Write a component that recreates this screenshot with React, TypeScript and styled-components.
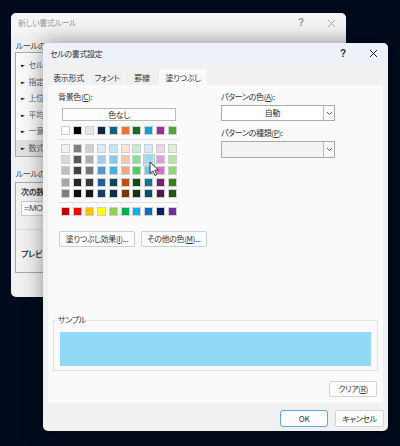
import React from "react";
import styled, { createGlobalStyle } from "styled-components";

const Global = createGlobalStyle`
  html, body { margin: 0; padding: 0; background: #020b1e; }
  #root { width: 400px; height: 446px; }
  * { box-sizing: border-box; }
`;
const Desktop = styled.div`
  position: relative; width: 400px; height: 446px; overflow: hidden;
  background: #020b1d;
  font-family: "Noto Sans CJK JP", "Noto Sans", sans-serif;
  font-size: 8px; line-height: 12px; color: #333; letter-spacing: -0.35px;
  font-feature-settings: "palt";
`;
const BackWindow = styled.section`
  position: absolute; left: 11px; top: 13px; width: 335px; height: 284px;
  display: flex; flex-direction: column; overflow: hidden;
  background: #f1f1f1; border-radius: 5px; color: #555;
`;
const FrontWindow = styled.section`
  position: absolute; left: 43px; top: 43px; width: 345px; height: 388px;
  display: flex; flex-direction: column;
  background: #f1f1f1; border-radius: 5px;
  box-shadow: 0 0 22px rgba(0,0,0,.42);
`;
const TitleBar = styled.header<{ $active?: boolean }>`
  flex: none; height: 21px; display: flex; align-items: center; padding-left: 7px;
  background: ${p => p.$active ? "#eef1fa" : "#f5f5f5"};
  color: ${p => p.$active ? "#333" : "#999"};
  border-radius: 5px 5px 0 0;
`;
const BackTitleBar = styled(TitleBar)`height: 20px; margin-bottom: 7px;`;
const TitleText = styled.span`flex: 1;`;
const TitleHelp = styled.span`width: 30px; text-align: center; font-size: 10px; font-family: "Liberation Sans", sans-serif; font-weight: 700;`;
const CloseSlot = styled.span`width: 30px; display: flex; justify-content: center;`;
const BackBody = styled.div`padding: 0 4px; display: flex; flex-direction: column;`;
const BackLabel = styled.div`white-space: nowrap; color: #444; height: 12px; padding-left: 1px;`;
const RuleList = styled.ul`
  list-style: none; margin: 0; padding: 4px 0 0; height: 105px;
  border: 1px solid #aaa; background: #fafafa; display: flex; flex-direction: column;
`;
const RuleItem = styled.li<{ $selected?: boolean }>`
  height: 16.8px; line-height: 16px; padding-left: 5px; white-space: nowrap; color: #666;
  display: flex; align-items: center; gap: 4px;
  background: ${p => p.$selected ? "#e2e2e2" : "transparent"};
`;
const Bullet = styled.span`font-size: 5px; color: #111; font-family: "DejaVu Sans", sans-serif;`;
const RuleSection = styled.div`margin-top: 11px;`;
const RuleBox = styled.div`
  border: 1px solid #aaa; height: 91px; margin-top: 2px; background: #f2f2f2;
  display: flex; flex-direction: column;
`;
const RuleTop = styled.div`height: 47px; padding: 3px 5px; border-bottom: 1px solid #ddd;`;
const StrongText = styled.div`font-weight: 700; color: #444; white-space: nowrap;`;
const FormulaInput = styled.div`
  margin-top: 3px; height: 15px; width: 200px; background: #fff; border: 1px solid #ccc;
  font-family: "Liberation Sans", sans-serif; font-size: 9px; padding-left: 2px; color: #555; line-height: 13px;
`;
const Preview = styled(StrongText)`padding: 18px 5px 0;`;

const Tabs = styled.nav`flex: none; display: flex; align-items: flex-end; height: 21px; padding: 0 5px;`;
const Tab = styled.button<{ $active?: boolean; $w: number }>`
  all: unset; box-sizing: border-box; width: ${p => p.$w}px; text-align: center;
  height: ${p => p.$active ? 16 : 14}px; line-height: ${p => p.$active ? 15 : 14}px;
  background: ${p => p.$active ? "#fafafa" : "#f0f0f0"};
  border-right: 1px solid #f8f8f8; color: #333;
`;
const Panel = styled.div`
  flex: none; height: 318px; margin: 0 5px; background: #fafafa; padding: 6px 5px 0;
  display: flex; flex-direction: column;
`;
const Columns = styled.div`display: flex; flex: none; height: 229px;`;
const LeftCol = styled.div`width: 168px; padding-left: 5px;`;
const RightCol = styled.div`width: 115px;`;
const Label = styled.div`height: 12px; color: #333; white-space: nowrap;`;
const Key = styled.span`text-decoration: underline;`;
const NoColor = styled.button`
  all: unset; box-sizing: border-box; display: block; width: 114px; height: 13px; margin: 5px 0 3px 4px;
  border: 1px solid #bbb; background: #fdfdfd; text-align: center; line-height: 11px; color: #333;
`;
const PaletteGrid = styled.div<{ $rowH: number }>`
  display: grid; grid-template-columns: repeat(10, 11.85px); grid-auto-rows: ${p => p.$rowH}px;
  margin-left: 2px; justify-items: center; align-items: center;
`;
const Divider = styled.hr`border: 0; height: 1px; background: #e2e2e2; margin: 3px 0; width: 121px;`;
const SwatchCell = styled.span<{ $on?: boolean }>`
  width: 12px; height: 12px; display: flex; align-items: center; justify-content: center;
  background: ${p => p.$on ? "#cde6f7" : "transparent"};
  outline: ${p => p.$on ? "1px solid #a8d4f0" : "none"}; outline-offset: -1px;
`;
const Swatch = styled.span<{ $c: string }>`
  width: 9px; height: 9px; background: ${p => p.$c}; border: 1px solid #cfcfcf;
`;
const Select = styled.div<{ $h: number; $off?: boolean }>`
  width: 114px; height: ${p => p.$h}px; margin-top: 2px; display: flex;
  border: 1px solid #aaa; background: ${p => p.$off ? "#f3f3f3" : "#fff"};
`;
const SelectValue = styled.span`flex: 1; text-align: center; line-height: 14px; color: #333;`;
const SelectArrow = styled.span`width: 11px; background: #fafafa; border-left: 1px solid #bbb; display: flex; align-items: center; justify-content: center;`;
const SecondLabel = styled(Label)`margin-top: 6px;`;
const ActionRow = styled.div`display: flex; gap: 6px; margin-top: 13px; margin-left: 1px;`;
const PlainButton = styled.button<{ $w: number; $h?: number }>`
  all: unset; box-sizing: border-box; width: ${p => p.$w}px; height: ${p => p.$h ?? 16}px; text-align: center;
  border: 1px solid #d4d4d4; border-radius: 2px; background: #fdfdfd; line-height: 14px; color: #333; white-space: nowrap;
`;
const ActionButton = styled(PlainButton)`border-color: #c8d0da;`;
const SampleBox = styled.fieldset`
  margin: 0; padding: 0 6px 5px; height: 51px; border: 1px solid #e3e3e3; position: relative; flex: none;
`;
const SampleLegend = styled.span`
  position: absolute; left: 3px; top: -7px; background: #fafafa; padding: 0 1px; color: #333;
`;
const SampleFill = styled.div`height: 34px; margin-top: 11px; background: #92d9f7;`;
const ClearRow = styled.div`display: flex; justify-content: flex-end; margin-top: 10px; padding-right: 1px;`;
const Footer = styled.footer`flex: 1; display: flex; justify-content: flex-end; align-items: flex-start; gap: 7px; padding: 7px 4px 0 0;`;
const OkButton = styled(PlainButton)`border: 1px solid #5fa7dc; border-radius: 3px; line-height: 15px;`;
const CancelButton = styled(PlainButton)`line-height: 15px;`;
const Cursor = styled.svg`position: absolute; left: 149px; top: 161px;`;

const Close = ({ c }: { c: string }) => (
  <svg width="9" height="9" viewBox="0 0 9 9"><path d="M1 1l7 7M8 1L1 8" stroke={c} strokeWidth="1" fill="none" /></svg>
);
const Chevron = () => (
  <svg width="7" height="5" viewBox="0 0 7 5"><path d="M1 1l2.5 2.5L6 1" stroke="#666" fill="none" /></svg>
);

const theme = ["#ffffff","#000000","#e7e6e6","#0e2841","#156082","#e97132","#196b24","#0f9ed5","#a02b93","#4ea72e"];
const shades = [
  ["#f2f2f2","#7f7f7f","#d0d0d0","#dceaf7","#c1e5f5","#fbe3d6","#c1f0c8","#caedfb","#f2ceef","#d9f2d0"],
  ["#d9d9d9","#595959","#adadad","#a6caec","#83cbeb","#f6c6ad","#83e28e","#95dcf7","#e59edd","#b4e5a2"],
  ["#bfbfbf","#404040","#757575","#4e95d9","#45b0e1","#f1a983","#47d359","#60caf3","#d86dcd","#8ed973"],
  ["#a6a6a6","#262626","#3a3838","#215f9a","#0f4761","#c04f15","#0f4d18","#0b769f","#782070","#3b7d23"],
  ["#7f7f7f","#0d0d0d","#171717","#163e64","#0b3041","#80350e","#0c3512","#074f6a","#501549","#275317"],
];
const standard = ["#c00000","#ff0000","#ffc000","#ffff00","#92d050","#00b050","#00b0f0","#0070c0","#002060","#7030a0"];

const Row = ({ colors, rowH, on }: { colors: string[]; rowH: number; on?: string }) => (
  <PaletteGrid $rowH={rowH}>
    {colors.map((c, i) => (
      <SwatchCell key={i} $on={c === on}><Swatch $c={c} /></SwatchCell>
    ))}
  </PaletteGrid>
);

const rules = ["セル", "指定", "上位", "平均", "一意", "数式"];

export default function App() {
  return (
    <Desktop>
      <Global />
      <BackWindow>
        <BackTitleBar>
          <TitleText>新しい書式ルール</TitleText>
          <TitleHelp>?</TitleHelp>
          <CloseSlot><Close c="#a8a8a8" /></CloseSlot>
        </BackTitleBar>
        <BackBody>
          <BackLabel>ルールの</BackLabel>
          <RuleList>
            {rules.map((r, i) => <RuleItem key={i} $selected={i === 5}><Bullet>►</Bullet>{r}</RuleItem>)}
          </RuleList>
          <RuleSection>
            <BackLabel>ルールの</BackLabel>
            <RuleBox>
              <RuleTop>
                <StrongText>次の数</StrongText>
                <FormulaInput>=MO</FormulaInput>
              </RuleTop>
              <Preview>プレビ</Preview>
            </RuleBox>
          </RuleSection>
        </BackBody>
      </BackWindow>

      <FrontWindow>
        <TitleBar $active>
          <TitleText>セルの書式設定</TitleText>
          <TitleHelp>?</TitleHelp>
          <CloseSlot><Close c="#222" /></CloseSlot>
        </TitleBar>
        <Tabs>
          <Tab $w={42}>表示形式</Tab>
          <Tab $w={35}>フォント</Tab>
          <Tab $w={35}>罫線</Tab>
          <Tab $w={47} $active>塗りつぶし</Tab>
        </Tabs>
        <Panel>
          <Columns>
            <LeftCol>
              <Label>背景色(<Key>C</Key>):</Label>
              <NoColor>色なし</NoColor>
              <Row colors={theme} rowH={12} />
              <Divider />
              {shades.map((s, i) => <Row key={i} colors={s} rowH={11.2} on={i === 1 ? "#95dcf7" : undefined} />)}
              <Divider />
              <Row colors={standard} rowH={12} />
              <ActionRow>
                <ActionButton $w={76}>塗りつぶし効果(<Key>I</Key>)...</ActionButton>
                <ActionButton $w={66}>その他の色(<Key>M</Key>)...</ActionButton>
              </ActionRow>
            </LeftCol>
            <RightCol>
              <Label>パターンの色(<Key>A</Key>):</Label>
              <Select $h={16}><SelectValue>自動</SelectValue><SelectArrow><Chevron /></SelectArrow></Select>
              <SecondLabel>パターンの種類(<Key>P</Key>):</SecondLabel>
              <Select $h={17} $off><SelectValue /><SelectArrow><Chevron /></SelectArrow></Select>
            </RightCol>
          </Columns>
          <SampleBox>
            <SampleLegend>サンプル</SampleLegend>
            <SampleFill />
          </SampleBox>
          <ClearRow><PlainButton $w={48}>クリア(<Key>R</Key>)</PlainButton></ClearRow>
        </Panel>
        <Footer>
          <OkButton $w={48} $h={17}>OK</OkButton>
          <CancelButton $w={49} $h={17}>キャンセル</CancelButton>
        </Footer>
      </FrontWindow>
      <Cursor width="12" height="16" viewBox="0 0 12 16">
        <path d="M1 1v11.5l2.8-2.5 2 4.5 2-.9-2-4.4H9.5z" fill="#fff" stroke="#333" strokeWidth="1" />
      </Cursor>
    </Desktop>
  );
}
